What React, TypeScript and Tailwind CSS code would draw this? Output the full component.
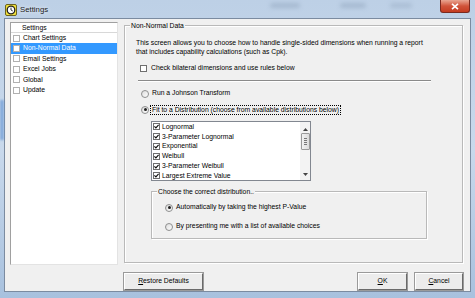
import React from "react";

const Check = ({ checked = false, light = false }: { checked?: boolean; light?: boolean }) => (
  <span
    className={`flex h-[7px] w-[7px] shrink-0 items-center justify-center border bg-white ${
      light ? "border-[#b0b0b0]" : "border-[#6f6f6f]"
    }`}
  >
    {checked && (
      <svg viewBox="0 0 5 5" className="h-[5px] w-[5px]">
        <path d="M0.4 2.4 L1.9 3.9 L4.6 0.9" fill="none" stroke="#111" strokeWidth="1.2" />
      </svg>
    )}
  </span>
);

const Radio = ({ checked = false }: { checked?: boolean }) => (
  <span className="flex h-[8px] w-[8px] shrink-0 items-center justify-center rounded-full border border-[#8e8f8f] bg-gradient-to-br from-[#dcdcdc] to-white">
    {checked && <span className="h-[3px] w-[3px] rounded-full bg-[#1e1e1e]" />}
  </span>
);

const Button = ({ children, w }: { children: React.ReactNode; w: string }) => (
  <div
    className={`${w} flex h-[17px] items-center justify-center border border-t-white border-l-white border-r-[#6a6a6a] border-b-[#6a6a6a] bg-[#ececec] shadow-[0_0_0_1px_#9a9a9a]`}
  >
    {children}
  </div>
);

export default function App() {
  const treeItems = ["Chart Settings", "Non-Normal Data", "Email Settings", "Excel Jobs", "Global", "Update"];
  const distributions = [
    "Lognormal",
    "3-Parameter Lognormal",
    "Exponential",
    "Weibull",
    "3-Parameter Weibull",
    "Largest Extreme Value",
  ];

  return (
    <div className="relative flex h-[298px] w-[475px] flex-col overflow-hidden bg-gradient-to-b from-[#bdd0e6] via-[#c9d9ec] to-[#a8c1de] font-['Liberation_Sans',Arial,sans-serif] text-[6.8px] text-black">
      {/* blurred glass behind the title bar */}
      <div className="absolute left-[270px] top-[3px] h-[5px] w-[30px] rounded-full bg-[#8fa3bb] opacity-50 blur-[2px]" />
      <div className="absolute left-[340px] top-[3px] h-[5px] w-[26px] rounded-full bg-[#8fa3bb] opacity-50 blur-[2px]" />
      <div className="absolute left-[390px] top-[3px] h-[5px] w-[22px] rounded-full bg-[#8fa3bb] opacity-40 blur-[2px]" />
      <div className="absolute left-0 top-[100px] h-[40px] w-[4px] bg-[#5b8fd0] opacity-60 blur-[1px]" />

      {/* TITLE BAR */}
      <div className="relative flex h-[18px] shrink-0 items-start pl-[5px] pr-[5px]">
        <svg viewBox="0 0 12 12" className="mt-[4px] h-[12px] w-[12px]">
          <rect x="0.5" y="0.5" width="11" height="11" rx="1.5" fill="#f3e23a" stroke="#6b6320" />
          <circle cx="6" cy="6" r="3.8" fill="#fff" stroke="#222" strokeWidth="1.3" />
          <path d="M6 3.6 V6 L7.8 7" fill="none" stroke="#222" strokeWidth="0.9" />
        </svg>
        <span className="ml-[3px] mt-[5px] text-[7.8px] leading-[10px] text-[#1c1c1c] [text-shadow:0_0_4px_#fff]">
          Settings
        </span>
        <div className="flex-1" />
        <div className="flex h-[13px] w-[30px] items-center justify-center rounded-b-[3px] border border-t-0 border-[#7a2a20] bg-gradient-to-b from-[#e8a592] via-[#d0533a] to-[#c43c21]">
          <svg viewBox="0 0 8 7" className="h-[7px] w-[8px]">
            <path d="M1 0.8 L7 6.2 M7 0.8 L1 6.2" stroke="#fff" strokeWidth="1.6" />
          </svg>
        </div>
      </div>

      {/* CLIENT AREA */}
      <div className="mx-[4px] flex h-[274px] shrink-0 flex-col border border-[#7b8ba0] bg-[#f0f0f0]">
        <div className="flex items-start">
          {/* TREE */}
          <div className="ml-[5px] mt-[3px] h-[243px] w-[108px] border border-t-[#a0a0a0] border-l-[#a0a0a0] border-r-[#e3e3e3] border-b-[#e3e3e3] bg-white">
            <div className="flex h-[10px] items-center border-b border-[#d8d8d8] pl-[11px] leading-[10px]">Settings</div>
            {treeItems.map((item) => {
              const selected = item === "Non-Normal Data";
              return (
                <div
                  key={item}
                  className={`flex h-[10.4px] items-center gap-[3px] pl-[2px] ${selected ? "bg-[#3399ff] text-white" : ""}`}
                >
                  <Check light />
                  <span>{item}</span>
                </div>
              );
            })}
          </div>

          {/* GROUP BOX */}
          <div className="relative ml-[6px] mt-[6px] h-[238px] w-[339px] border border-[#b9b9b9] pl-[11px] pt-[12px] shadow-[inset_1px_1px_0_#fff,1px_1px_0_#fff]">
            <span className="absolute left-[5px] top-[-5px] bg-[#f0f0f0] px-[1px] leading-[9px]">Non-Normal Data</span>

            <p className="leading-[9px]">
              This screen allows you to choose how to handle single-sided dimensions when running a report
              <br />
              that includes capability calculations (such as Cpk).
            </p>

            <div className="ml-[4px] mt-[8px] flex h-[9px] items-center gap-[4px]">
              <Check />
              <span>Check bilateral dimensions and use rules below</span>
            </div>

            <div className="ml-[2px] mt-[7px] h-[2px] w-[293px] border-t border-b border-t-[#8a8a8a] border-b-white" />

            <div className="ml-[5px] mt-[7px] flex h-[9px] items-center gap-[2px]">
              <Radio />
              <span className="px-[1px]">Run a Johnson Transform</span>
            </div>

            <div className="ml-[5px] mt-[7px] flex h-[9px] items-center gap-[1px]">
              <Radio checked />
              <span className="border border-dotted border-black px-[1px] leading-[8px]">
                Fit to a Distribution (choose from available distributions below)
              </span>
            </div>

            {/* LIST BOX */}
            <div className="ml-[15px] mt-[7px] flex h-[60px] w-[160px] border border-[#828790] bg-white">
              <div className="flex-1">
                {distributions.map((d) => (
                  <div key={d} className="flex h-[9.8px] items-center gap-[2px] pl-[1px]">
                    <Check checked />
                    <span>{d}</span>
                  </div>
                ))}
              </div>
              <div className="flex w-[10px] flex-col items-center bg-[#f3f3f3]">
                <svg viewBox="0 0 5 3" className="mt-[6px] h-[3px] w-[5px]">
                  <path d="M0 3 L2.5 0 L5 3 Z" fill="#444" />
                </svg>
                <div className="mt-[2px] flex h-[17px] w-[9px] flex-col items-center justify-center gap-[1px] rounded-[1px] border border-[#9a9a9a] bg-gradient-to-r from-[#f2f2f2] to-[#dcdcdc]">
                  <span className="h-[1px] w-[3px] bg-[#777]" />
                  <span className="h-[1px] w-[3px] bg-[#777]" />
                  <span className="h-[1px] w-[3px] bg-[#777]" />
                  <span className="h-[1px] w-[3px] bg-[#777]" />
                </div>
                <div className="flex-1" />
                <svg viewBox="0 0 5 3" className="mb-[4px] h-[3px] w-[5px]">
                  <path d="M0 0 L2.5 3 L5 0 Z" fill="#444" />
                </svg>
              </div>
            </div>

            {/* INNER GROUP */}
            <div className="relative ml-[15px] mt-[10px] h-[48px] w-[276px] border border-[#b9b9b9] pl-[13px] pt-[11px] shadow-[inset_1px_1px_0_#fff,1px_1px_0_#fff]">
              <span className="absolute left-[5px] top-[-5px] bg-[#f0f0f0] px-[1px] leading-[9px]">
                Choose the correct distribution..
              </span>
              <div className="flex h-[9px] items-center gap-[3px]">
                <Radio checked />
                <span>Automatically by taking the highest P-Value</span>
              </div>
              <div className="mt-[10px] flex h-[9px] items-center gap-[3px]">
                <Radio />
                <span>By presenting me with a list of available choices</span>
              </div>
            </div>
          </div>
        </div>

        {/* BUTTONS */}
        <div className="mt-[8px] flex items-center">
          <div className="ml-[119px]">
            <Button w="w-[79px]">
              <span>
                <span className="underline">R</span>estore Defaults
              </span>
            </Button>
          </div>
          <div className="flex-1" />
          <Button w="w-[49px]">
            <span>
              <span className="underline">O</span>K
            </span>
          </Button>
          <div className="ml-[8px] mr-[7px]">
            <Button w="w-[48px]">
              <span>
                <span className="underline">C</span>ancel
              </span>
            </Button>
          </div>
        </div>
      </div>
    </div>
  );
}
